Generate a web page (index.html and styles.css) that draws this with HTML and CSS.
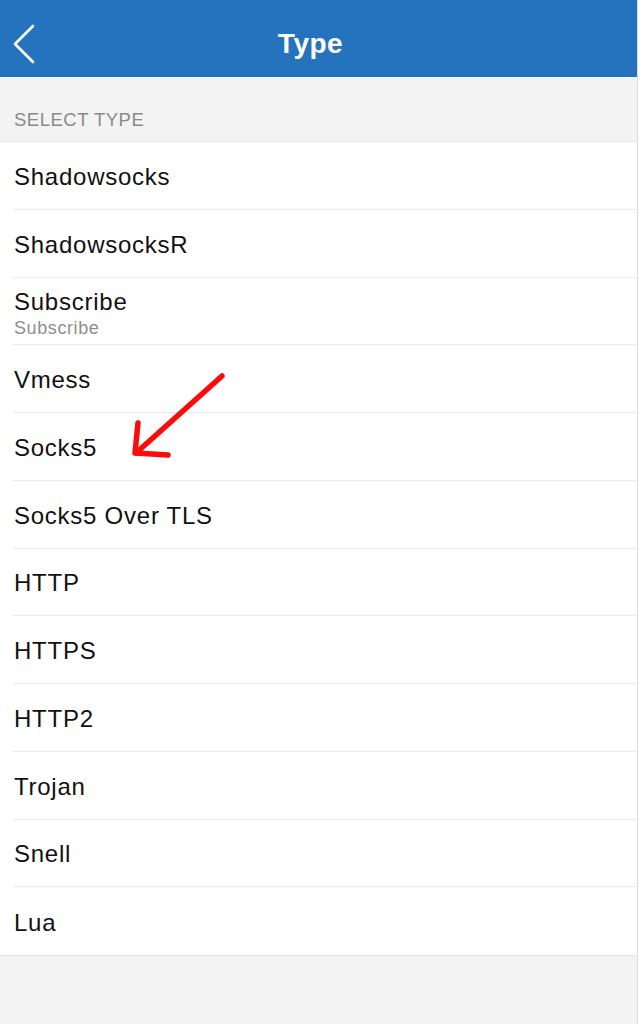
FILE: index.html
```html
<!DOCTYPE html>
<html>
<head>
<meta charset="utf-8">
<link rel="stylesheet" href="styles.css">
</head>
<body>
<div class="screen">
  <header class="navbar">
    <span class="back">
      <svg width="24" height="40" viewBox="0 0 24 40"><polyline points="21,2 3,20 21,38" fill="none" stroke="#fff" stroke-width="2.6" stroke-linecap="round" stroke-linejoin="round"/></svg>
    </span>
    <h1 class="title">Type</h1>
  </header>
  <div class="section-head">SELECT TYPE</div>
  <ul class="list">
    <li class="row"><span class="label">Shadowsocks</span></li>
    <li class="row"><span class="label">ShadowsocksR</span></li>
    <li class="row two-line"><span class="label">Subscribe</span><span class="sub">Subscribe</span></li>
    <li class="row"><span class="label">Vmess</span></li>
    <li class="row"><span class="label">Socks5</span></li>
    <li class="row"><span class="label">Socks5 Over TLS</span></li>
    <li class="row"><span class="label">HTTP</span></li>
    <li class="row"><span class="label">HTTPS</span></li>
    <li class="row"><span class="label">HTTP2</span></li>
    <li class="row"><span class="label">Trojan</span></li>
    <li class="row"><span class="label">Snell</span></li>
    <li class="row"><span class="label">Lua</span></li>
  </ul>
  <div class="footer"></div>
  <svg class="annot" width="120" height="110" viewBox="0 0 120 110">
    <g fill="none" stroke="#ff0a0a" stroke-width="5.5" stroke-linecap="round" stroke-linejoin="round">
      <line x1="112" y1="8" x2="26" y2="85"/>
      <polyline points="28,55 25,85 58,87"/>
    </g>
  </svg>
</div>
</body>
</html>
```

FILE: styles.css
```css
* { box-sizing: border-box; }
html, body { margin: 0; padding: 0; background: #fff; }
body { font-family: "Liberation Sans", Arial, sans-serif; }
.screen {
  position: relative;
  width: 638px;
  height: 1024px;
  background: #f3f3f3;
  border-right: 1px solid #dcdcdc;
  display: flex;
  flex-direction: column;
}
.navbar {
  height: 77px;
  padding-top: 10px;
  background: #2673bd;
  display: flex;
  align-items: center;
  justify-content: center;
  position: relative;
  flex: none;
}
.back {
  position: absolute;
  left: 12px;
  top: 24px;
  display: flex;
}
.title {
  margin: 0 16px 0 0;
  color: #fff;
  font-size: 28px;
  line-height: 32px;
  font-weight: bold;
  letter-spacing: 0.5px;
}
.section-head {
  height: 65px;
  padding: 32px 0 0 14px;
  font-size: 18.5px;
  color: #8a8a8a;
  letter-spacing: 0.5px;
  border-bottom: 1px solid #e6e6e6;
  flex: none;
}
.list {
  list-style: none;
  margin: 0;
  padding: 0 0 0 13px;
  background: #fff;
  border-bottom: 1px solid #e6e6e6;
  flex: none;
}
.row {
  height: 67.75px;
  display: flex;
  flex-direction: column;
  justify-content: center;
  border-bottom: 1px solid #ececec;
  padding: 3px 0 0 1px;
  color: #111;
}
.row.two-line { padding-top: 0; }
.row:last-child { border-bottom: none; }
.label {
  font-size: 24px;
  letter-spacing: 0.75px;
  line-height: 28px;
}
.sub {
  font-size: 18px;
  color: #8e8e8e;
  letter-spacing: 0.6px;
  line-height: 20px;
  margin-top: 2px;
  margin-bottom: -4px;
}
.footer { flex: 1; }
.annot {
  position: absolute;
  left: 110px;
  top: 368px;
}
```
